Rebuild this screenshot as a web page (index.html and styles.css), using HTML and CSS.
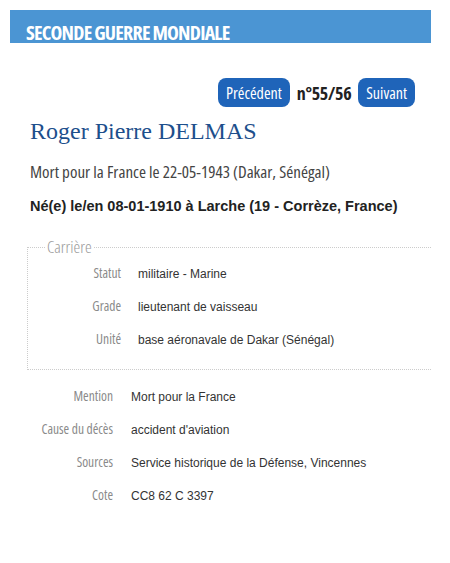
FILE: index.html
```html
<!DOCTYPE html>
<html lang="fr">
<head>
<meta charset="utf-8">
<link rel="stylesheet" href="styles.css">
</head>
<body>
<div class="banner"><span class="banner-text">SECONDE GUERRE MONDIALE</span></div>
<div class="nav">
  <a class="btn">Précédent</a>
  <span class="counter">n°55/56</span>
  <a class="btn">Suivant</a>
</div>
<h1 class="name">Roger Pierre DELMAS</h1>
<p class="death">Mort pour la France le 22-05-1943 (Dakar, Sénégal)</p>
<p class="birth">Né(e) le/en 08-01-1910 à Larche (19 - Corrèze, France)</p>
<fieldset class="career">
  <legend>Carrière</legend>
  <dl class="rows rows-in">
    <dt>Statut</dt><dd>militaire - Marine</dd>
    <dt>Grade</dt><dd>lieutenant de vaisseau</dd>
    <dt>Unité</dt><dd>base aéronavale de Dakar (Sénégal)</dd>
  </dl>
</fieldset>
<dl class="rows rows-out">
  <dt>Mention</dt><dd>Mort pour la France</dd>
  <dt>Cause du décès</dt><dd>accident d'aviation</dd>
  <dt>Sources</dt><dd>Service historique de la Défense, Vincennes</dd>
  <dt>Cote</dt><dd>CC8 62 C 3397</dd>
</dl>
</body>
</html>
```
FILE: styles.css
```css
html, body { margin: 0; padding: 0; background: #fff; }
body { width: 450px; font-family: "Liberation Sans", Arial, sans-serif; color: #333; }

.banner {
  margin: 10px 19px 0 10px;
  height: 33px;
  background: #4b95d3;
  padding-left: 16px;
  box-sizing: border-box;
}
.banner-text {
  display: block;
  font-family: "Open Sans", sans-serif;
  font-stretch: 75%;
  font-weight: 700;
  font-size: 20px;
  line-height: 20px;
  padding-top: 13px;
  color: #fff;
  letter-spacing: -0.8px;
  white-space: nowrap;
}

.nav {
  display: flex;
  justify-content: flex-end;
  align-items: center;
  gap: 6px;
  margin: 35px 35px 0 0;
}
.btn {
  background: #1f64b9;
  color: #fff;
  border-radius: 8px;
  height: 29px;
  padding: 0 8px;
  display: flex;
  align-items: center;
  font-family: "Open Sans", sans-serif;
  font-stretch: 75%;
  font-weight: 400;
  font-size: 16px;
}
.counter {
  font-family: "Open Sans", sans-serif;
  font-stretch: 75%;
  font-weight: 700;
  font-size: 18px;
  letter-spacing: -0.3px;
  color: #222;
  padding: 0 1px;
}

.name {
  margin: 9px 0 0 30px;
  font-family: "Liberation Serif", "DejaVu Serif", serif;
  font-weight: normal;
  font-size: 24px;
  color: #1d4f8c;
  line-height: 30px;
}
.death {
  margin: 16px 0 0 30px;
  font-family: "Open Sans", sans-serif;
  font-stretch: 75%;
  font-weight: 400;
  font-size: 17px;
  color: #444;
  line-height: 20px;
}
.birth {
  margin: 15px 0 0 30px;
  font-weight: bold;
  font-size: 14.5px;
  color: #222;
  line-height: 18px;
}

.career {
  margin: 23px 19px 0 27px;
  padding: 0 0 13px 0;
  border: 1px dotted #ccc;
  border-right: none;
}
.career legend {
  margin-left: 18px;
  padding: 0 1px;
  font-family: "Open Sans", sans-serif;
  font-stretch: 75%;
  font-weight: 300;
  font-size: 17px;
  line-height: 18px;
  color: #999;
}

.rows {
  display: grid;
  margin: 0;
  align-items: baseline;
}
.rows dt {
  text-align: right;
  font-family: "Open Sans", sans-serif;
  font-stretch: 75%;
  font-weight: 500;
  font-size: 13.5px;
  color: #8a8a8a;
  line-height: 32px;
}
.rows dd {
  margin: 0;
  font-size: 12px;
  color: #333;
  line-height: 32px;
}
.rows-in { grid-template-columns: 93px auto; column-gap: 17px; margin-top: 1px; }
.rows-out { grid-template-columns: 113px auto; column-gap: 18px; margin-top: 10px; }
```
